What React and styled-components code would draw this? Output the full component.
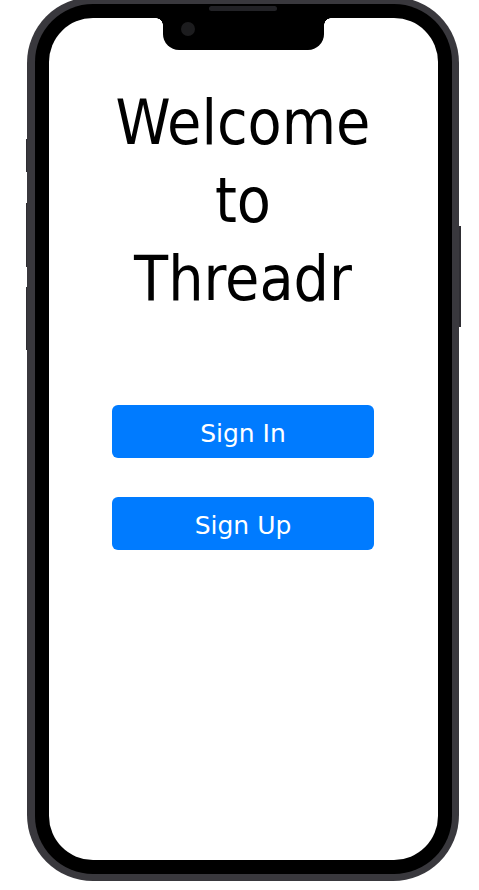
import React from 'react';
import styled, { createGlobalStyle } from 'styled-components';

const GlobalStyle = createGlobalStyle`
  html, body {
    margin: 0;
    padding: 0;
    background: #ffffff;
    font-family: "DejaVu Sans", Verdana, sans-serif;
  }
`;

function App() {
  return (
    <>
      <GlobalStyle />
      <Page>
        <Phone>
          <SideButton side="left" top={142.5} length={33} />
          <SideButton side="left" top={206.5} length={64} />
          <SideButton side="left" top={290.5} length={63} />
          <SideButton side="right" top={229.5} length={101} />
          <Speaker />
          <Bezel>
            <Screen>
              <Notch>
                <Camera />
              </Notch>
              <Title>
                Welcome
                <br />
                to
                <br />
                Threadr
              </Title>
              <Actions>
                <ActionButton>Sign In</ActionButton>
                <ActionButton>Sign Up</ActionButton>
              </Actions>
            </Screen>
          </Bezel>
        </Phone>
      </Page>
    </>
  );
}

export default App;

const Page = styled.div`
  display: flex;
  padding-left: 27px;
`;

const Phone = styled.div`
  position: relative;
  margin-top: -3.5px;
  width: 432px;
  height: 884.5px;
  box-sizing: border-box;
  padding: 7.5px;
  background: #39383d;
  border-radius: 66px;
  display: flex;
`;

const SideButton = styled.div`
  position: absolute;
  ${(p) => (p.side === 'left' ? 'left: -1.5px;' : 'right: -1.5px;')}
  top: ${(p) => p.top}px;
  width: 1.5px;
  height: ${(p) => p.length}px;
  background: #2e2d32;
`;

const Speaker = styled.div`
  position: absolute;
  left: 182px;
  top: 9.5px;
  width: 68px;
  height: 5px;
  border-radius: 3px;
  background: #222226;
  z-index: 2;
`;

const Bezel = styled.div`
  flex: 1;
  display: flex;
  padding: 14px;
  background: #000000;
  border-radius: 58px;
`;

const Screen = styled.div`
  position: relative;
  flex: 1;
  display: flex;
  flex-direction: column;
  align-items: center;
  padding-top: 66px;
  background: #ffffff;
  border-radius: 44px;
  overflow: hidden;
`;

const Notch = styled.div`
  position: absolute;
  top: 0;
  left: 114px;
  width: 161px;
  height: 32px;
  background: #000000;
  border-radius: 0 0 16px 16px;

  &::before,
  &::after {
    content: '';
    position: absolute;
    top: 0;
    width: 7px;
    height: 7px;
  }

  &::before {
    left: -7px;
    background: radial-gradient(circle at 0 100%, transparent 6.5px, #000 7px);
  }

  &::after {
    right: -7px;
    background: radial-gradient(circle at 100% 100%, transparent 6.5px, #000 7px);
  }
`;

const Camera = styled.div`
  position: absolute;
  left: 18px;
  top: 3.5px;
  width: 14px;
  height: 14px;
  border-radius: 50%;
  background: #1c1c1e;
`;

const Title = styled.h1`
  margin: 0;
  font-family: "DejaVu Sans Condensed", "DejaVu Sans", sans-serif;
  font-weight: normal;
  font-size: 62px;
  line-height: 78px;
  text-align: center;
  color: #000000;
`;

const Actions = styled.div`
  display: flex;
  flex-direction: column;
  align-items: center;
  gap: 39px;
  margin-top: 87px;
`;

const ActionButton = styled.button`
  width: 262px;
  height: 53px;
  padding: 3px 0 0;
  border: none;
  border-radius: 6px;
  background: #007bff;
  color: #ffffff;
  font-family: "DejaVu Sans", Verdana, sans-serif;
  font-size: 25px;
  cursor: pointer;
`;
